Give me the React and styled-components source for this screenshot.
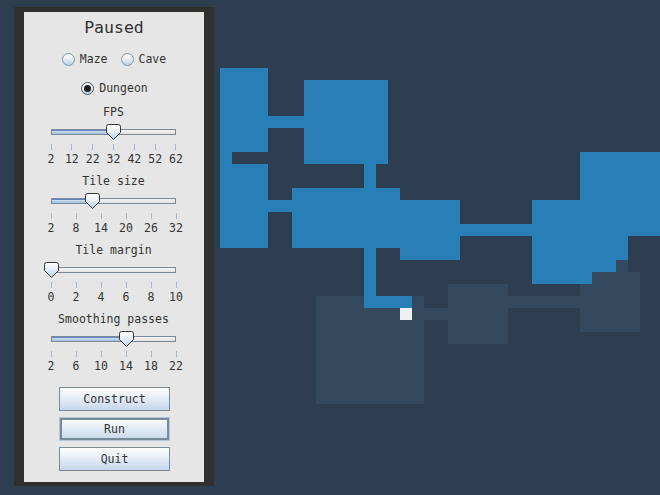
import React from "react";
import styled, { createGlobalStyle } from "styled-components";

const GlobalStyle = createGlobalStyle`
  html, body {
    margin: 0;
    padding: 0;
    background: #2c3e50;
  }
  body {
    font-family: "DejaVu Sans Mono", "Liberation Mono", monospace;
    color: #333333;
  }
`;

const sliders = [
  { label: "FPS", min: 2, max: 62, value: 32, ticks: [2, 12, 22, 32, 42, 52, 62] },
  { label: "Tile size", min: 2, max: 32, value: 12, ticks: [2, 8, 14, 20, 26, 32] },
  { label: "Tile margin", min: 0, max: 10, value: 0, ticks: [0, 2, 4, 6, 8, 10] },
  { label: "Smoothing passes", min: 2, max: 22, value: 14, ticks: [2, 6, 10, 14, 18, 22] },
];

const BLUE = "#2980b9";
const GREY = "#34495e";

const blueTiles = [
  [220, 68, 48, 84],
  [220, 152, 12, 12],
  [220, 164, 48, 84],
  [268, 116, 36, 12],
  [304, 80, 84, 84],
  [364, 164, 12, 24],
  [268, 200, 24, 12],
  [292, 188, 108, 60],
  [400, 200, 60, 60],
  [460, 224, 72, 12],
  [580, 152, 90, 84],
  [532, 200, 96, 60],
  [532, 260, 84, 12],
  [532, 272, 60, 12],
  [364, 248, 12, 60],
  [376, 296, 36, 12],
];

const greyTiles = [
  [316, 296, 108, 108],
  [424, 308, 24, 12],
  [448, 284, 60, 60],
  [508, 296, 72, 12],
  [580, 284, 60, 48],
  [592, 272, 48, 12],
  [616, 260, 12, 12],
];

const Radio = ({ label, checked }) => (
  <RadioItem>
    <RadioCircle checked={checked} />
    <span>{label}</span>
  </RadioItem>
);

const Thumb = ({ pct }) => (
  <ThumbWrap style={{ left: `calc(${pct}% - 7.5px)` }}>
    <svg width="15" height="17" viewBox="0 0 15 17">
      <defs>
        <linearGradient id="thumbGrad" x1="0" y1="0" x2="0" y2="1">
          <stop offset="0" stopColor="#ffffff" />
          <stop offset="0.45" stopColor="#e8f0f8" />
          <stop offset="1" stopColor="#b9cfe6" />
        </linearGradient>
      </defs>
      <path
        d="M0.5 2.5 Q0.5 0.5 2.5 0.5 H12.5 Q14.5 0.5 14.5 2.5 V8.5 L7.5 15.5 L0.5 8.5 Z"
        fill="url(#thumbGrad)"
        stroke="#333"
        strokeWidth="1"
      />
    </svg>
  </ThumbWrap>
);

const Slider = ({ label, min, max, value, ticks }) => {
  const pct = ((value - min) / (max - min)) * 100;
  return (
    <SliderGroup>
      <Label>{label}</Label>
      <SliderBox>
        <Rail>
          <Fill style={{ width: `${pct}%` }} />
        </Rail>
        <Thumb pct={pct} />
      </SliderBox>
      <TickRow>
        {ticks.map((t) => (
          <Tick key={t}>
            <TickMark />
            <TickLabel>{t}</TickLabel>
          </Tick>
        ))}
      </TickRow>
    </SliderGroup>
  );
};

const DungeonMap = () => (
  <svg width="446" height="495" viewBox="214 0 446 495">
    {greyTiles.map(([x, y, w, h], i) => (
      <rect key={"g" + i} x={x} y={y} width={w} height={h} fill={GREY} />
    ))}
    {blueTiles.map(([x, y, w, h], i) => (
      <rect key={"b" + i} x={x} y={y} width={w} height={h} fill={BLUE} />
    ))}
    <rect x="400" y="308" width="12" height="12" fill="#ecf0f1" />
  </svg>
);

export default function App() {
  return (
    <>
      <GlobalStyle />
      <Page>
        <Frame>
          <Panel>
            <Title>Paused</Title>
            <RadioRow>
              <Radio label="Maze" />
              <Radio label="Cave" />
            </RadioRow>
            <RadioRow second>
              <Radio label="Dungeon" checked />
            </RadioRow>
            <Sliders>
              {sliders.map((s) => (
                <Slider key={s.label} {...s} />
              ))}
            </Sliders>
            <Buttons>
              <Button>Construct</Button>
              <Button focused>Run</Button>
              <Button>Quit</Button>
            </Buttons>
          </Panel>
        </Frame>
        <MapArea>
          <DungeonMap />
        </MapArea>
      </Page>
    </>
  );
}

const Page = styled.div`
  display: flex;
  width: 660px;
  height: 495px;
  overflow: hidden;
  background: #2c3e50;
`;

const Frame = styled.div`
  box-sizing: border-box;
  width: 200px;
  height: 479px;
  margin: 7px 0 0 14px;
  border-style: solid;
  border-color: #30302e;
  border-width: 5px 10px 4px 10px;
  flex-shrink: 0;
`;

const Panel = styled.div`
  height: 100%;
  background: #e6e6e6;
  display: flex;
  flex-direction: column;
  align-items: stretch;
`;

const Title = styled.div`
  margin-top: 6px;
  font-size: 16.5px;
  line-height: 20px;
  text-align: center;
`;

const RadioRow = styled.div`
  display: flex;
  justify-content: center;
  gap: 13px;
  height: 16px;
  margin-top: 13px;
  font-size: 11.5px;
  padding-left: ${(p) => (p.second ? "1px" : "0")};
`;

const RadioItem = styled.label`
  display: flex;
  align-items: center;
  gap: 5px;
  line-height: 16px;
`;

const RadioCircle = styled.span`
  box-sizing: border-box;
  width: 13px;
  height: 13px;
  border-radius: 50%;
  border: 1px solid ${(p) => (p.checked ? "#4a5560" : "#8594a3")};
  background: linear-gradient(to bottom, #ffffff 0%, #e6eef6 45%, #bcd0e4 100%);
  display: flex;
  align-items: center;
  justify-content: center;
  &::after {
    content: "";
    display: ${(p) => (p.checked ? "block" : "none")};
    width: 7px;
    height: 7px;
    border-radius: 50%;
    background: #1e1e1e;
  }
`;

const Sliders = styled.div`
  margin-top: 9px;
  display: flex;
  flex-direction: column;
  gap: 8px;
`;

const SliderGroup = styled.div`
  display: flex;
  flex-direction: column;
  padding: 0 28px 0 27px;
`;

const Label = styled.div`
  font-size: 11.5px;
  line-height: 14px;
  height: 14px;
  text-align: center;
`;

const SliderBox = styled.div`
  position: relative;
  height: 20px;
  margin-top: 3px;
  display: flex;
  align-items: center;
`;

const Rail = styled.div`
  box-sizing: border-box;
  flex: 1;
  height: 6px;
  border: 1px solid #7a8a99;
  background: linear-gradient(to bottom, #f4f4f4, #e2e2e2);
  overflow: hidden;
`;

const Fill = styled.div`
  height: 100%;
  background: linear-gradient(to bottom, #e4edf7 0%, #b8cfe5 60%, #9fbbdb 100%);
  box-shadow: inset 0 1px 0 #6382bf;
`;

const ThumbWrap = styled.div`
  position: absolute;
  top: 2px;
  width: 15px;
  height: 17px;
  line-height: 0;
`;

const TickRow = styled.div`
  display: flex;
  justify-content: space-between;
  margin-top: 2px;
`;

const Tick = styled.div`
  width: 0;
  display: flex;
  flex-direction: column;
  align-items: center;
  gap: 2px;
`;

const TickMark = styled.div`
  width: 1px;
  height: 6px;
  background: #a3b8cc;
`;

const TickLabel = styled.div`
  font-size: 11.5px;
  line-height: 14px;
  white-space: nowrap;
`;

const Buttons = styled.div`
  margin-top: 14px;
  display: flex;
  flex-direction: column;
  align-items: center;
  gap: 6px;
  padding-left: 1px;
`;

const Button = styled.button`
  box-sizing: border-box;
  width: 111px;
  height: 24px;
  padding: 0;
  font-family: "DejaVu Sans Mono", "Liberation Mono", monospace;
  font-size: 11.5px;
  color: #333333;
  border: 1px solid ${(p) => (p.focused ? "#b3c5da" : "#7a8a99")};
  box-shadow: ${(p) => (p.focused ? "inset 0 0 0 2px #7a8a99" : "none")};
  background: linear-gradient(to bottom, #ffffff 0%, #eaf1f8 35%, #c6d7ea 100%);
`;

const MapArea = styled.div`
  flex: 1;
  overflow: hidden;
  line-height: 0;
`;
